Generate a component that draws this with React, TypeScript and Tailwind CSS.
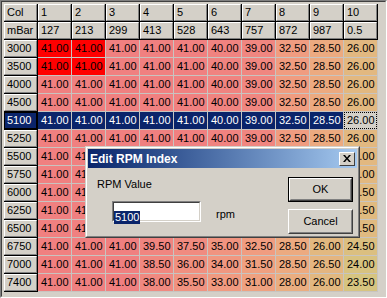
import React from 'react';

type Row = { h: string; v: number[] };
const base = [41, 41, 41, 41, 41, 40, 39, 32.5, 28.5, 26];
const rows: Row[] = [
  { h: '3000', v: base },
  { h: '3500', v: base },
  { h: '4000', v: base },
  { h: '4500', v: base },
  { h: '5100', v: base },
  { h: '5250', v: base },
  { h: '5500', v: base },
  { h: '5750', v: base },
  { h: '6000', v: [41, 41, 41, 41, 41, 40, 39, 32.5, 28.5, 25.5] },
  { h: '6250', v: [41, 41, 41, 41, 40.5, 39.5, 37.5, 32.5, 28.5, 25.5] },
  { h: '6500', v: [41, 41, 41, 40.5, 39, 37, 35, 32.5, 28.5, 25.5] },
  { h: '6750', v: [41, 41, 41, 39.5, 37.5, 35, 32.5, 28.5, 26, 24.5] },
  { h: '7000', v: [41, 41, 41, 38.5, 36, 34, 31.5, 28.5, 26.5, 24] },
  { h: '7400', v: [41, 41, 41, 38, 35.5, 33, 31, 28, 26, 23.5] },
];
const colHdr = ['1', '2', '3', '4', '5', '6', '7', '8', '9', '10'];
const mbar = ['127', '213', '299', '413', '528', '643', '757', '872', '987', '0.5'];

const anchors: [number, number[]][] = [
  [23.5, [214, 196, 128]],
  [26, [226, 184, 128]],
  [28.5, [236, 170, 128]],
  [32.5, [240, 156, 128]],
  [39, [240, 134, 128]],
  [41, [240, 128, 128]],
];

function heat(v: number): string {
  if (v <= anchors[0][0]) return `rgb(${anchors[0][1].join(',')})`;
  for (let i = 0; i < anchors.length - 1; i++) {
    const [a, ca] = anchors[i];
    const [b, cb] = anchors[i + 1];
    if (v >= a && v <= b) {
      const t = (v - a) / (b - a);
      const c = ca.map((x, k) => Math.round(x + (cb[k] - x) * t));
      return `rgb(${c.join(',')})`;
    }
  }
  return `rgb(${anchors[anchors.length - 1][1].join(',')})`;
}

function Fixed({ text, selected }: { text: string; selected?: boolean }) {
  return (
    <div className="w-[34px] h-[18px] shrink-0 border-r border-b border-black">
      {selected ? (
        <div className="h-full border border-black bg-[#0a246a] text-white pl-[2px] pt-[1px] text-[11px] leading-[13px]">
          {text}
        </div>
      ) : (
        <div className="h-full border-t border-l border-t-white border-l-white border-r border-b border-r-[#808080] border-b-[#808080] bg-[#d4d0c8] text-black pl-[2px] pt-[1px] text-[11px] leading-[13px]">
          {text}
        </div>
      )}
    </div>
  );
}

function Cell({ v, bg, fg, focus }: { v: string; bg: string; fg: string; focus?: boolean }) {
  return (
    <div
      className="w-[34px] h-[18px] shrink-0 border-r border-b border-[#c8c4c0]"
      style={{ backgroundColor: bg, color: fg }}
    >
      {focus ? (
        <div className="h-full border border-dotted border-black pl-[2px] pt-[1px] text-[11px] leading-[13px]">{v}</div>
      ) : (
        <div className="h-full pl-[3px] pt-[2px] text-[11px] leading-[13px]">{v}</div>
      )}
    </div>
  );
}

function Btn({ label, def }: { label: string; def?: boolean }) {
  const inner = (
    <div className="h-full border border-t-white border-l-white border-r-[#404040] border-b-[#404040]">
      <div className="h-full border border-t-[#d4d0c8] border-l-[#d4d0c8] border-r-[#808080] border-b-[#808080] flex items-center justify-center text-[11px] leading-[13px] text-black">
        {label}
      </div>
    </div>
  );
  return def ? (
    <div className="w-[65px] h-[25px] border border-black bg-[#d4d0c8]">{inner}</div>
  ) : (
    <div className="w-[65px] h-[25px] bg-[#d4d0c8]">{inner}</div>
  );
}

export default function App() {
  return (
    <div className="w-[387px] h-[298px] relative overflow-hidden font-['Liberation_Sans',Arial,sans-serif] border border-t-[#808080] border-l-[#808080] border-r-white border-b-white">
      <div className="h-full border border-t-[#404040] border-l-[#404040] border-r-[#d4d0c8] border-b-[#d4d0c8] bg-[#d4d0c8] pt-[2px] pl-[2px] overflow-hidden">
        <div className="flex">
          <Fixed text="Col" />
          {colHdr.map((c) => (
            <Fixed key={c} text={c} />
          ))}
        </div>
        <div className="flex">
          <Fixed text="mBar" />
          {mbar.map((c) => (
            <Fixed key={c} text={c} />
          ))}
        </div>
        {rows.map((r, ri) => (
          <div key={r.h} className="flex">
            <Fixed text={r.h} selected={ri === 4} />
            {r.v.map((v, ci) => {
              const sel = ri === 4;
              const focus = sel && ci === 9;
              let bg = heat(v);
              let fg = '#000';
              if (ri < 2 && ci < 2) bg = '#ff0000';
              if (sel) {
                bg = '#0a246a';
                fg = '#fff';
              }
              if (focus) {
                bg = '#d4d0c8';
                fg = '#000';
              }
              return <Cell key={ci} v={v.toFixed(2)} bg={bg} fg={fg} focus={focus} />;
            })}
          </div>
        ))}
      </div>

      {/* Dialog */}
      <div className="absolute left-[84px] top-[145px] w-[275px] h-[92px] border border-t-[#d4d0c8] border-l-[#d4d0c8] border-r-[#404040] border-b-[#404040]">
        <div className="h-full border border-t-white border-l-white border-r-[#808080] border-b-[#808080] bg-[#d4d0c8] p-[1px] flex flex-col">
          <div className="h-[19px] shrink-0 flex items-center bg-gradient-to-r from-[#0a246a] to-[#a6caf0] pl-[2px] pr-[2px]">
            <span className="text-white font-bold text-[12px] leading-[14px]">Edit RPM Index</span>
            <div className="ml-auto w-[16px] h-[14px] bg-[#d4d0c8] border border-t-white border-l-white border-r-[#404040] border-b-[#404040] flex items-center justify-center">
              <svg width="8" height="7" viewBox="0 0 8 7">
                <path d="M0 0h2l2 2.5L6 0h2L5 3.5 8 7H6L4 4.5 2 7H0l3-3.5z" fill="#000" />
              </svg>
            </div>
          </div>
          <div className="flex-1 flex">
            <div className="flex flex-col pt-[10px]">
              <div className="pl-[9px] text-[11px] leading-[13px] text-black">RPM Value</div>
              <div className="flex items-start mt-[10px] pl-[24px]">
                <div className="w-[89px] h-[21px] bg-white border border-t-[#808080] border-l-[#808080] border-r-white border-b-white">
                  <div className="h-full border border-t-[#404040] border-l-[#404040] border-r-[#d4d0c8] border-b-[#d4d0c8] pt-[1px]">
                    <span className="inline-block bg-[#0a246a] text-white px-[1px] text-[11px] leading-[13px]">5100</span>
                  </div>
                </div>
                <div className="ml-[15px] mt-[7px] text-[11px] leading-[13px] text-black">rpm</div>
              </div>
            </div>
            <div className="ml-auto mr-[4px] pt-[9px] flex flex-col gap-[7px]">
              <Btn label="OK" def />
              <Btn label="Cancel" />
            </div>
          </div>
        </div>
      </div>
    </div>
  );
}
